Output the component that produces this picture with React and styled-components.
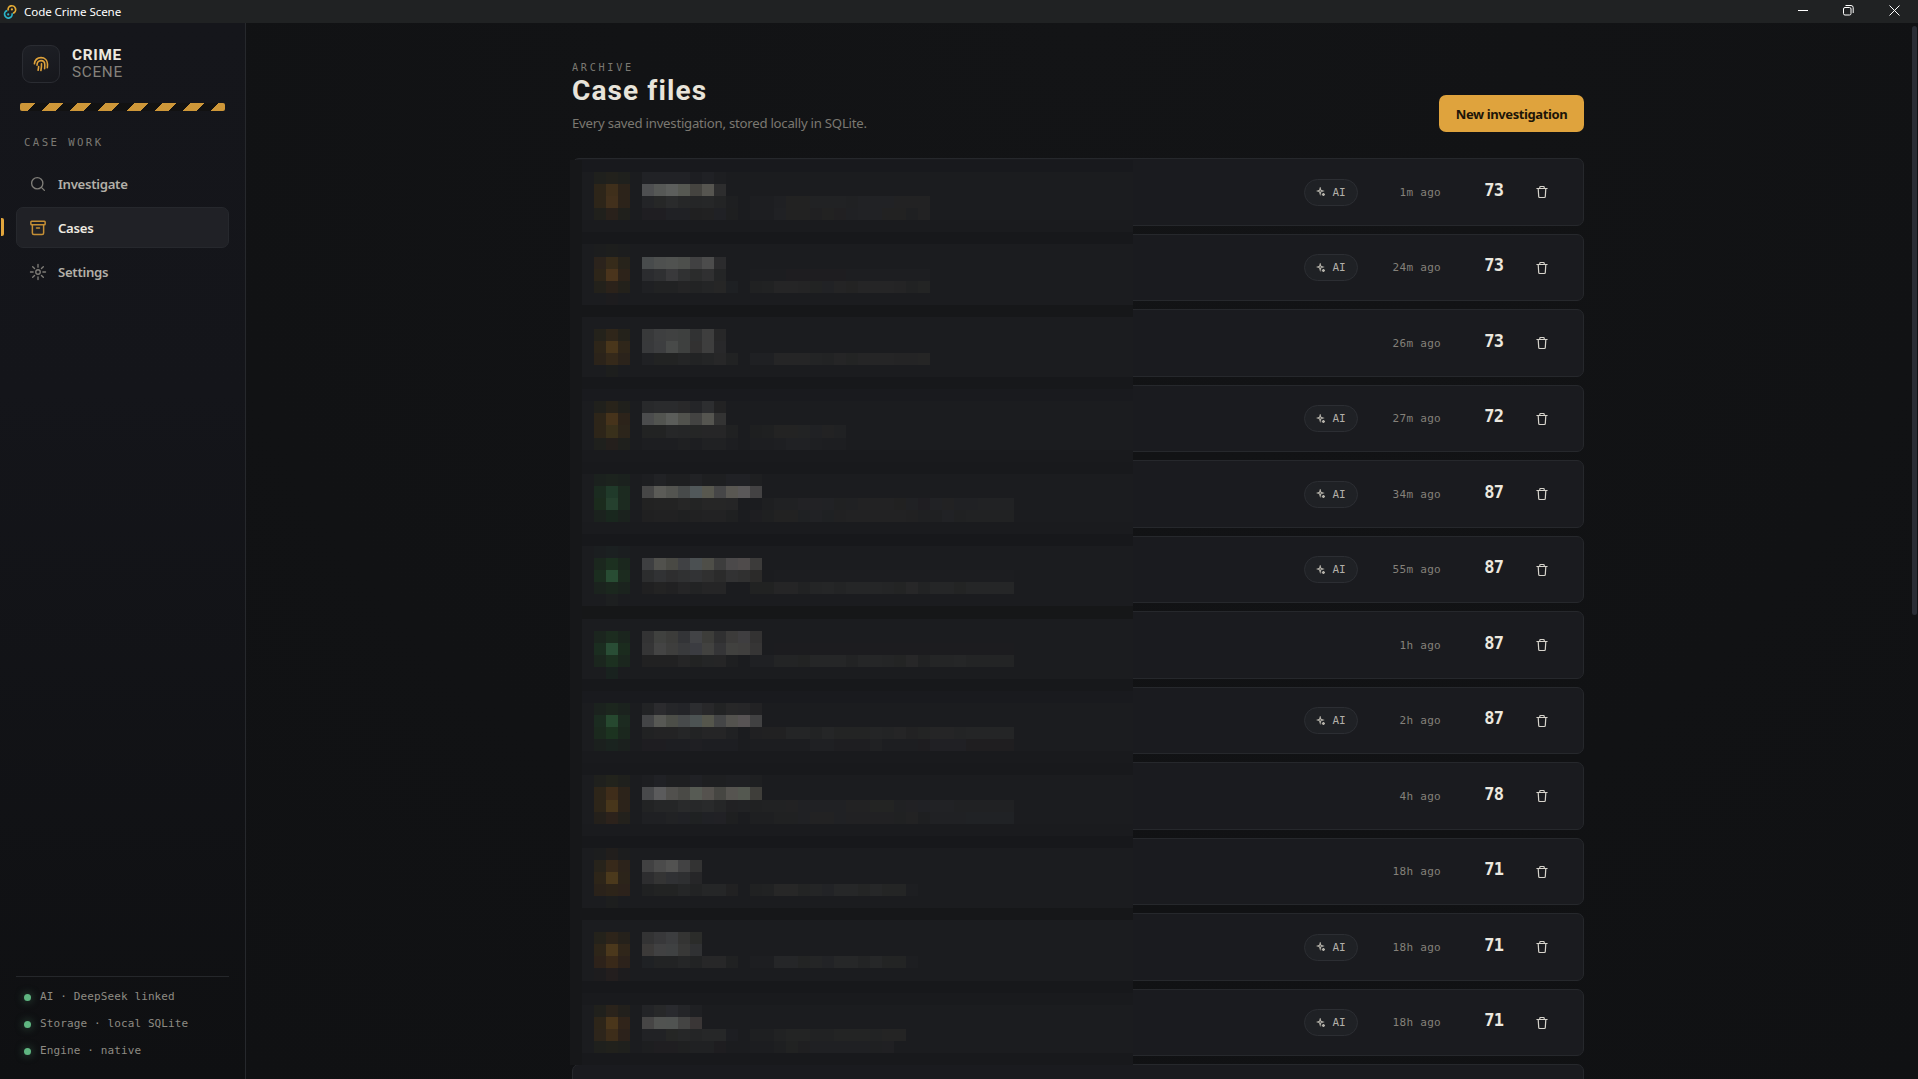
import React from 'react'
import styled, { createGlobalStyle } from 'styled-components'

const sans = '"Noto Sans", "Open Sans", sans-serif'
const mono = '"DejaVu Sans Mono", "Liberation Mono", monospace'
const display = 'Roboto, "Liberation Sans", sans-serif'

const GlobalStyle = createGlobalStyle`
  * { box-sizing: border-box; }
  body {
    margin: 0;
    background: #111214;
    color: #e8e4da;
    font-family: ${sans};
    overflow: hidden;
  }
`

const Window = styled.div`
  display: flex;
  flex-direction: column;
  height: 100vh;
  overflow: hidden;
`

const TitleBar = styled.header`
  display: flex;
  align-items: center;
  flex: none;
  height: 23px;
  padding: 0 1px 0 3px;
  background: #202223;
  color: #fff;
  font-size: 11.6px;
  letter-spacing: -0.1px;
`

const TitleText = styled.span`
  flex: 1;
  margin-left: 7px;
`

const WindowButton = styled.span`
  display: flex;
  align-items: center;
  justify-content: center;
  width: 45.5px;
  height: 20px;
  margin-bottom: 3px;
`

const Body = styled.div`
  display: flex;
  flex: 1;
  min-height: 0;
`

const Sidebar = styled.aside`
  display: flex;
  flex-direction: column;
  width: 246px;
  padding: 22px 16px 20px;
  border-right: 1px solid #26282c;
  background: linear-gradient(180deg, #15161b 0%, #14151a 35%, #0f1012 100%);
`

const Brand = styled.div`
  display: flex;
  align-items: center;
  gap: 12px;
  padding-left: 6px;
`

const BrandMark = styled.div`
  display: flex;
  align-items: center;
  justify-content: center;
  width: 38px;
  height: 38px;
  border: 1px solid #2a2c32;
  border-radius: 9px;
  background: linear-gradient(160deg, #1e2026, #16171c);
`

const BrandName = styled.div`
  font-family: ${display};
  font-size: 15.3px;
  line-height: 17px;
  letter-spacing: 0.7px;
  color: #85827c;
`

const BrandStrong = styled.div`
  font-weight: 700;
  color: #ece8df;
`

const Tape = styled.div`
  flex: none;
  height: 8px;
  margin: 20px 4px 0;
  border-radius: 2px;
  opacity: 0.9;
  background: repeating-linear-gradient(-45deg, #e2a53c 0 10px, #111 10px 20px);
`

const SectionLabel = styled.div`
  margin: 23px 0 0 8px;
  font-family: ${mono};
  font-size: 10.7px;
  line-height: 18px;
  letter-spacing: 2.4px;
  color: #7b7973;
`

const Nav = styled.nav`
  display: flex;
  flex-direction: column;
  gap: 3px;
  margin-top: 11px;
`

const NavItem = styled.a`
  position: relative;
  display: flex;
  align-items: center;
  gap: 11px;
  height: 41px;
  padding-left: 12px;
  border: 1px solid ${(props) => (props.$active ? '#26282d' : 'transparent')};
  border-radius: 7px;
  background: ${(props) => (props.$active ? '#202126' : 'transparent')};
  color: ${(props) => (props.$active ? '#eeeae1' : '#b3b0a8')};
  font-size: 13.2px;
  font-weight: 600;
  letter-spacing: -0.3px;

  svg {
    color: ${(props) => (props.$active ? '#c58f35' : '#7f7d78')};
  }
`

const ActiveMark = styled.span`
  position: absolute;
  left: -16px;
  top: 10px;
  width: 3px;
  height: 18px;
  border-radius: 0 2px 2px 0;
  background: #e2a53c;
`

const Status = styled.div`
  display: flex;
  flex-direction: column;
  gap: 9px;
  margin-top: auto;
  padding: 10px 0 0 8px;
  border-top: 1px solid #25272b;
`

const StatusLine = styled.div`
  display: flex;
  align-items: center;
  gap: 9px;
  height: 18px;
  font-family: ${mono};
  font-size: 11px;
  letter-spacing: 0.12px;
  color: #8e8b83;
`

const Dot = styled.span`
  width: 7px;
  height: 7px;
  margin-top: 2px;
  border-radius: 50%;
  background: #5fb681;
  box-shadow: 0 0 8px rgba(95, 182, 129, 0.5);
`

const Main = styled.main`
  display: flex;
  justify-content: center;
  flex: 1;
  overflow: hidden;
  background: radial-gradient(circle at 50% 0, #131416, #101113);
`

const ScrollTrack = styled.div`
  width: 8px;
  padding: 3px 1px 0 2px;
  background: #111214;
`

const ScrollThumb = styled.div`
  height: 589px;
  border-radius: 3px;
  background: #2a2d35;
`

const Page = styled.div`
  width: 1012px;
  padding-top: 36px;
`

const PageHead = styled.div`
  display: flex;
  align-items: flex-end;
  justify-content: space-between;
  height: 73px;
`

const Heading = styled.div`
  margin-bottom: -1px;
`

const Eyebrow = styled.div`
  font-family: ${mono};
  font-size: 10.2px;
  line-height: 16px;
  letter-spacing: 2.7px;
  color: #7b7972;
`

const Title = styled.h1`
  margin: 0;
  font-family: ${display};
  font-size: 28px;
  font-weight: 700;
  line-height: 30px;
  letter-spacing: 1.1px;
  color: #e8e4da;
`

const Subtitle = styled.p`
  margin: 8px 0 0;
  font-size: 13.2px;
  line-height: 19px;
  letter-spacing: -0.24px;
  color: #7b7871;
`

const PrimaryButton = styled.button`
  width: 145px;
  height: 37px;
  padding: 0;
  border: 0;
  border-radius: 7px;
  background: #dfa33d;
  color: #1c1508;
  font-family: ${sans};
  font-size: 13px;
  font-weight: 700;
  letter-spacing: -0.4px;
`

const List = styled.div`
  position: relative;
  display: flex;
  flex-direction: column;
  gap: 8px;
  margin-top: 26px;
`

const CaseRow = styled.article`
  display: flex;
  align-items: center;
  justify-content: flex-end;
  flex: none;
  height: 67.5px;
  padding: 1px 34px 0 0;
  border: 1px solid #26282c;
  border-radius: 7px;
  background: #1a1b1f;
`

const Pill = styled.span`
  display: flex;
  align-items: center;
  justify-content: center;
  gap: 6px;
  width: 54px;
  height: 27px;
  border: 1px solid #2c2e33;
  border-radius: 14px;
  background: #1f2125;
  color: #b3b0a8;
  font-family: ${mono};
  font-size: 11px;
`

const Age = styled.time`
  width: 83px;
  font-family: ${mono};
  font-size: 11px;
  letter-spacing: 0.3px;
  text-align: right;
  color: #84817a;
`

const Score = styled.span`
  width: 62px;
  padding-bottom: 5px;
  font-family: ${mono};
  font-size: 17px;
  font-weight: 700;
  letter-spacing: -0.9px;
  text-align: right;
  color: #ece8df;
`

const DeleteButton = styled.span`
  display: flex;
  margin-left: 32px;
  color: #d6d3cb;
`

const Mosaic = styled.div`
  position: absolute;
  top: 2px;
  left: -2px;
  display: grid;
  grid-template-rows: repeat(75, 1fr);
  width: 563px;
  height: 905px;
  background: #1b1c1f;
`

const MosaicLine = styled.div`
  display: flex;
  border-left: 12px solid #161719;
`

const Tile = styled.i`
  flex: none;
`

const cases = [
  { age: '1m ago', score: 73, ai: true },
  { age: '24m ago', score: 73, ai: true },
  { age: '26m ago', score: 73 },
  { age: '27m ago', score: 72, ai: true },
  { age: '34m ago', score: 87, ai: true },
  { age: '55m ago', score: 87, ai: true },
  { age: '1h ago', score: 87 },
  { age: '2h ago', score: 87, ai: true },
  { age: '4h ago', score: 78 },
  { age: '18h ago', score: 71 },
  { age: '18h ago', score: 71, ai: true },
  { age: '18h ago', score: 71, ai: true },
]

// line number -> tiles from the second column on, "colour*count", "-" is empty
const tiles = {
  1: '- 1f201d 22211c 1f201d - 212226*4 1d1e22 202125 1d1e21',
  2: '- 2d2519 3f2f1b 2c231a - 4e4f51 565856 5c5e5c 565852 454440 565550 2d2d2e',
  3: '- 2d2519 42301c 2c231a - 232427 262727 2a2b2c 262728 252627 262728 232425 1e1f21 - 1d1e21*2 1f2023 222222*2 212224*3 202123 212225*3 222223*3',
  4: '- 20201c 29211b 20201c - 1f1e22*2 202125*2 202021 212122 202125 1e1f20 - 1d1e21*2 202124 222222*2 202022 222222 212022 202124 212225*2 222222*2 1f2022 222223',
  7: '- 1c1d1e 1d1e1d 1c1d1e',
  8: '- 2b231c 362b1a 27231b - 484b4c 4e504f 505250 4d4f4c 414142 4c4c4c 2b2b2d',
  9: '- 2d2519 4a341c 2d231a - 2b2c2f 2f3032 39393b 303132 2b2c2c 303031 242526 - - 1c1d20*3 1e1d20*5 1d1e21*7',
  10: '- 23211b 2b221a 23211b - 1f2023 212223*2 242425 222324 242526 262626 1e2023 - 202122 212223 252526*2 242425 222323 212225 242425 232323 252526*3 242425 212223 232424*1',
  11: '- - 1d1c1e',
  14: '- 24221b 2f261a 24221b - 38393a 3e3f40 404141 3e403f 313233 3e3e3e 272728',
  15: '- 2d2519 49361b 2f261a - 38393b 3d3e40 484a49 3e403f 323131 3e3e3e 28282a',
  16: '- 2b231a 35291a 2b231b - 202124 222323*2 242526 222324 242526 272728 212223 - 1f2023*2 252526*3 232425 222324 252526 232424 252526*3 242425*2 252525',
  17: '- - 1d1e1d',
  20: '- 20201c 28231a 20201c - 28292b 2a2b2d*2 29292a 242528 2d2e30 222223',
  21: '- 2d2519 46331b 2c231a - 4b4c4d 525450 5b5d5a 51524d 434342 555550 333333',
  22: '- 2d2519 39301b 2c251b - 222323*2 262728 252627 252626 262627*2 202122 - 1e1f20 1f2021 232323*2 222324 202124 222223 202123',
  23: '- 1f201d 241f1c 1f201d - 1d1e21*3 1f2022 1d1e21 202123*2 1d1e21 - 1d1e21*2 1e1f22 202124*2 1e1f22 1d1e21 1d1e21',
  26: '- 1b211e 1c231e 1b211e - 1d1e21 212225 1e1f21*2 212225 1e1f21*2 202125*2 1e1f21',
  27: '- 1b2b20 203a2a 1c2a20 - 464646 5b5b57 535450 474a4a 51585a 58584f 464647 595752 5a5859 434243',
  28: '- 1b2b1d 25402e 1c2a20 - 222222 232323*2 262626 232424 262626*2 252526 - - 1e1f21 202123*2 222225*2 212225 202122 202123 222223*3 212121 202124 1f1e22 212225 222223 202124*2 212224*3',
  29: '- 1b221e 19271e 1b221e - 202021 212122*2 1f2021 212122 222223*2 1f2021 - 1e1e21 1f2021 222222*2 1f2123 212225 1f2123 212122 222223*5 212122 1f2022*2 212225 202122 212223*4',
  32: '- 1b1e20 1b2021 1b1e20',
  33: '- 1b271e 1c3020 1b271e - 3e3f41 51514d 494944 404144 4b5052 4e4e48 3d3d3d 4b494a 4f4b4b 3c3b3a',
  34: '- 1b2d1f 284c33 1c2b1f - 2c2d2e 313234 2e2e2f 303132 323335 303030 2b2b2b 323233 303030 2b2a29 - 1c1d20*20',
  35: '- 1b231e 1b271e 1b231e - 202021 232323 212122 252526 222324 252526*2 - - 212222*2 252526*2 212223 242526 252627 232425 252627*3 242526 232424 272728 222324 252627*2 232424 252627*4',
  36: '- - 1d1f20',
  39: '- 1b251e 1c2c1f 1b251e - 333334 40413f 3c3c3a 333437 424346 3d3d3a 303031 3c3b3a 3f3e40 333232',
  40: '- 1b2d20 294d35 1b2b1e - 353536 444444 3e3e3d 393a3c 3b3c41 424240 353537 41413f 403f3e 363535 - 1c1c1f*20',
  41: '- 1b261e 1c3020 1b261e - 212122*3 252526 222323 242526 252526 1e1f21 - 1f2023*2 232425*2 222323 252627*3 222324 252627*2 242526 232424 272728 212223 242526*2 252627 232425*4',
  42: '- - 19221f',
  45: '- 1b221e 1c261e 1b221e - 222325 2b2b2e 252629 232428 2c2d30 28282a 222324 272728 262628 222224',
  46: '- 1b2b20 26482f 1c2a20 - 434446 575854 4c4e48 474a4b 4c5353 55564c 444546 53524e 575354 414142',
  47: '- 1b291e 1c3320 1b271e - 212223 232324*2 252627 222324 252526*2 202123 - 202022 212122*2 242526*2 222324 252627 232424*3 242526 232425 252526 222223 232424 252526*2 232425 242526*4',
  48: '- 1b201e 1a231f 1b201e - 1e1d21*2 1d1e22*2 1f1f23 1d1e22*3 - 1c1d20*5 1f2023*2 1e1e21*3 202123 1d1e21*3 1e1d20 202024*3 1f1e20*4',
  51: '- 1f201d 22231c 1f201d - 1d1e21 202125 1e1f21*2 202125 1e1f21*2 1f2023*2 1e1f21',
  52: '- 2d2519 3f2d1a 2c231a - 48494b 5b5b5c 51504d 4a4a46 575b54 55524e 464642 565450 545850 3f3e3a',
  53: '- 2d2519 48361b 2c231a - 222324 252627*2 292a2b 272829 292a2b 252627 212123 212224 202122 212223*2 222223 202124*4 222223*2 232423*2 202123 212124 202125 212225*2 202123*5',
  54: '- 24201b 2c221b 23211c - 1f2023*2 212224 202125 1f2122 202125 212125 1e1f20 - 1e1f21*2 202122*2 202124 222223*2 202124 212123*4 202122 222223 1e1f21 202124*3 202225*4',
  57: '- 1c1d1e 211e1c 1c1d1e',
  58: '- 27231b 37291a 2c231b - 414142 4b4b4b 525251 424243 333333',
  59: '- 2d2519 4b391c 2c241a - 2d2d2f 343434 303134 2e2f31 262628',
  60: '- 2a221a 2d2419 2c221b - 202122 222323*2 252627 222324 252627*2 212122 - 202122 212223 272727*2 232424 242526 222326 262728*2 242525 262728 242525*2 1d1e21',
  61: '- - 1d1e1e',
  64: '- 24221b 2d241a 25211b - 333334 38383a 3c3d3f 343433 2b2c2a',
  65: '- 2d2519 4b381c 30261a - 3c3a39 414142 3f4142 383837 303133',
  66: '- 2d221a 392919 2c221b - 1f2124 222324*2 252627 222324 272728*2 202122 - 1d1e21*2 252628*2 232424 242526 222326 262728*2 232425 262728 232424*2 1d1e21',
  67: '- 1d1c1e 231e1e 1d1c1e',
  70: '- 20201c 2a231b 22201c - 232427 272829 292a2e 242528 1f2023',
  71: '- 2d2519 4a361b 30241a - 464545 515351 505351 444443 3a3636',
  72: '- 2d251b 3d2d1a 2c221b - 212225*2 252625 262728 242526 262728*2 1d1e22 - 1e1f21*2 212223 232424*2 212223*2 232424*3 222324 242424*2',
  73: '- 1f201d 21211c 1f201d - 1d1e20 1f1e21*2 1f2021 202123*2 1e1d20 - - 1c1d20*2 1e1f21 212222 1f1f21 1f2023*5 1f2022 202023',
}

// darker lines where the gap between two cards falls
const shades = {
  0: '#18191d', 5: '#1a1b1e', 6: '#17181b', 12: '#161719', 18: '#17181b', 19: '#191a1e',
  24: '#191a1d', 25: '#18191c', 30: '#1a1b1e', 31: '#17181b', 37: '#161718', 43: '#17181b',
  44: '#191a1e', 49: '#191a1d', 50: '#18191c', 55: '#1a1b1e', 56: '#17181b', 62: '#161719',
  68: '#17181b', 69: '#191a1d', 74: '#18191c',
}

const parseTiles = (line) =>
  line.split(' ').map((part) => {
    const [color, count] = part.split('*')
    return { color: color === '-' ? 'transparent' : `#${color}`, count: Number(count || 1) }
  })

const Redaction = () => (
  <Mosaic>
    {Array.from({ length: 75 }, (_, n) => (
      <MosaicLine key={n} style={{ backgroundColor: shades[n] }}>
        {tiles[n] && <Tile style={{ width: 12 }} />}
        {tiles[n] && parseTiles(tiles[n].slice(2)).map((tile, i) => (
          <Tile key={i} style={{ width: tile.count * 12, backgroundColor: tile.color }} />
        ))}
      </MosaicLine>
    ))}
  </Mosaic>
)

const Icon = ({ size = 18, width = 1.8, children }) => (
  <svg
    width={size}
    height={size}
    viewBox="0 0 24 24"
    fill="none"
    stroke="currentColor"
    strokeWidth={width}
    strokeLinecap="round"
    strokeLinejoin="round"
  >
    {children}
  </svg>
)

const SearchIcon = () => (
  <Icon>
    <circle cx="11" cy="11" r="7.5" />
    <path d="m20.5 20.5-4-4" />
  </Icon>
)

const ArchiveIcon = () => (
  <Icon width={2}>
    <rect x="2.5" y="3" width="19" height="4.5" rx="1" />
    <path d="M4.500 7.500v11a2 2 0 0 0 2 2h11a2 2 0 0 0 2-2v-11M10 12h4" />
  </Icon>
)

const SettingsIcon = () => (
  <Icon>
    <circle cx="12" cy="12" r="3" />
    <path d="M12 2v3.500M12 18.500V22M2 12h3.500M18.500 12H22M4.900 4.900l2.500 2.500M16.600 16.600l2.500 2.500M4.900 19.100l2.500-2.500M16.600 7.400l2.500-2.500" />
  </Icon>
)

const PrintIcon = () => (
  <svg width="16" height="16" viewBox="0 0 16 16" fill="none" stroke="#dfa23a" strokeWidth="1.600" strokeLinecap="round">
    <path d="M1.400 7.800C1.900 4 4.500 1.600 8 1.600c3.900 0 6.500 2.800 6.500 6.400 0 1.400 0 2.500-.2 3.700" />
    <path d="M4 9.300C4 6.300 5.600 4.600 8 4.600c2.300 0 3.800 1.700 3.800 4.100 0 1.500 0 2.700-.2 4" />
    <path d="M8.500 7.800c.1 2.300-.1 4.500-.6 6.700M5.600 10.600c0 1.300-.2 2.400-.5 3.600" />
  </svg>
)

const AppLogo = () => (
  <svg width="14" height="16" viewBox="0 0 14 16" fill="none" strokeWidth="1.700">
    <path d="M5.200 6.600A3.800 3.800 0 1 1 10 9.200" stroke="#e5ac35" />
    <path d="M9 9.200A3.800 3.800 0 1 1 4.200 6.600" stroke="#2bb5c9" />
    <circle cx="8.900" cy="5.400" r="1.100" fill="#e5ac35" />
    <circle cx="5.200" cy="10.400" r="1.100" fill="#2bb5c9" />
  </svg>
)

const SparkleIcon = () => (
  <svg width="10" height="10" viewBox="0 0 10 10" fill="none" stroke="currentColor" strokeWidth="1.100">
    <path d="M4.200 1 4.900 3.300l2.100.7-2.100.7-.7 2.300-.7-2.300L1.400 4l2.100-.7z" />
    <path d="M7.400 5.900v3.200M5.800 7.500H9" strokeWidth="1.400" />
  </svg>
)

const TrashIcon = () => (
  <svg width="14" height="14" viewBox="0 0 14 14" fill="none" stroke="currentColor" strokeWidth="1.200" strokeLinecap="round" strokeLinejoin="round">
    <path d="M1.900 3.500h10.200M4.800 3.500V2.200c0-.4.3-.7.700-.7h3c.4 0 .7.300.7.700v1.300M3.200 3.500l.5 8c0 .6.400 1 1 1h4.600c.6 0 1-.4 1-1l.5-8" />
  </svg>
)

const navigation = [
  { label: 'Investigate', icon: <SearchIcon /> },
  { label: 'Cases', icon: <ArchiveIcon />, active: true },
  { label: 'Settings', icon: <SettingsIcon /> },
]

const App = () => (
  <Window>
    <GlobalStyle />
    <TitleBar>
      <AppLogo />
      <TitleText>Code Crime Scene</TitleText>
      <WindowButton>
        <svg width="10" height="10" stroke="#fff"><path d="M0 5.500h10" /></svg>
      </WindowButton>
      <WindowButton>
        <svg width="11" height="11" fill="none" stroke="#fff">
          <rect x="0.500" y="2.500" width="7.500" height="7.500" rx="1.500" />
          <path d="M2.500.5H8A2.200 2.200 0 0 1 10.200 2.700V8" />
        </svg>
      </WindowButton>
      <WindowButton>
        <svg width="11" height="11" stroke="#fff"><path d="m.5.500 10 10m0-10-10 10" /></svg>
      </WindowButton>
    </TitleBar>
    <Body>
      <Sidebar>
        <Brand>
          <BrandMark><PrintIcon /></BrandMark>
          <BrandName>
            <BrandStrong>CRIME</BrandStrong>
            SCENE
          </BrandName>
        </Brand>
        <Tape />
        <SectionLabel>CASE WORK</SectionLabel>
        <Nav>
          {navigation.map((item) => (
            <NavItem key={item.label} $active={item.active}>
              {item.active && <ActiveMark />}
              {item.icon}
              {item.label}
            </NavItem>
          ))}
        </Nav>
        <Status>
          <StatusLine><Dot />AI · DeepSeek linked</StatusLine>
          <StatusLine><Dot />Storage · local SQLite</StatusLine>
          <StatusLine><Dot />Engine · native</StatusLine>
        </Status>
      </Sidebar>
      <Main>
        <Page>
          <PageHead>
            <Heading>
              <Eyebrow>ARCHIVE</Eyebrow>
              <Title>Case files</Title>
              <Subtitle>Every saved investigation, stored locally in SQLite.</Subtitle>
            </Heading>
            <PrimaryButton>New investigation</PrimaryButton>
          </PageHead>
          <List>
            {cases.map((item, i) => (
              <CaseRow key={i}>
                {item.ai && <Pill><SparkleIcon />AI</Pill>}
                <Age>{item.age}</Age>
                <Score>{item.score}</Score>
                <DeleteButton><TrashIcon /></DeleteButton>
              </CaseRow>
            ))}
            <CaseRow />
            <Redaction />
          </List>
        </Page>
      </Main>
      <ScrollTrack>
        <ScrollThumb />
      </ScrollTrack>
    </Body>
  </Window>
)

export default App
